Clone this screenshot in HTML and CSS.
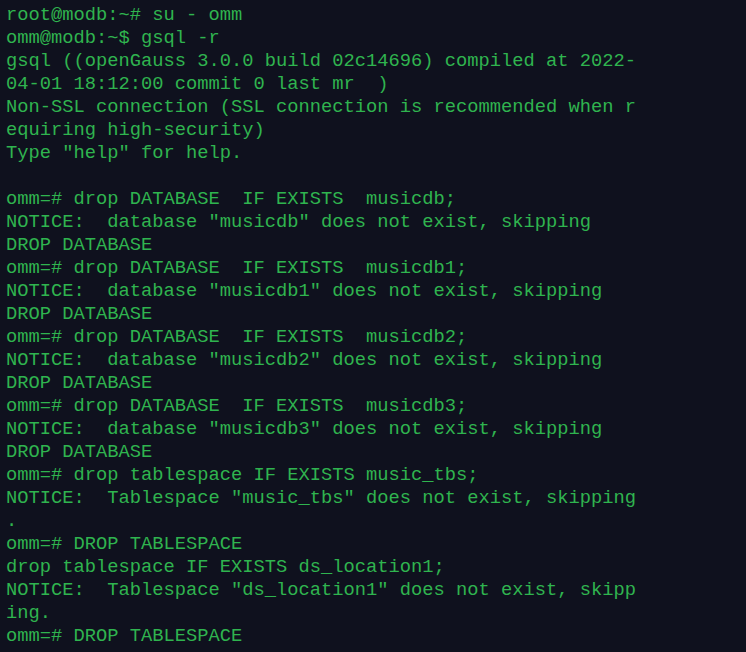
FILE: index.html
```html
<!DOCTYPE html>
<html>
<head>
<meta charset="utf-8">
<link rel="stylesheet" href="styles.css">
</head>
<body>
<pre class="term">root@modb:~# su - omm
omm@modb:~$ gsql -r
gsql ((openGauss 3.0.0 build 02c14696) compiled at 2022-
04-01 18:12:00 commit 0 last mr  )
Non-SSL connection (SSL connection is recommended when r
equiring high-security)
Type "help" for help.

omm=# drop DATABASE  IF EXISTS  musicdb;
NOTICE:  database "musicdb" does not exist, skipping
DROP DATABASE
omm=# drop DATABASE  IF EXISTS  musicdb1;
NOTICE:  database "musicdb1" does not exist, skipping
DROP DATABASE
omm=# drop DATABASE  IF EXISTS  musicdb2;
NOTICE:  database "musicdb2" does not exist, skipping
DROP DATABASE
omm=# drop DATABASE  IF EXISTS  musicdb3;
NOTICE:  database "musicdb3" does not exist, skipping
DROP DATABASE
omm=# drop tablespace IF EXISTS music_tbs;
NOTICE:  Tablespace "music_tbs" does not exist, skipping
.
omm=# DROP TABLESPACE
drop tablespace IF EXISTS ds_location1;
NOTICE:  Tablespace "ds_location1" does not exist, skipp
ing.
omm=# DROP TABLESPACE</pre>
</body>
</html>
```
FILE: styles.css
```css
html, body {
  margin: 0;
  padding: 0;
  background: #0f111e;
  height: 100%;
  overflow: hidden;
}
.term {
  margin: 0;
  padding: 4px 0 0 6px;
  font-family: "Liberation Mono", "Courier New", monospace;
  font-size: 18.75px;
  line-height: 23px;
  color: #2fb44f;
  white-space: pre;
}
```
